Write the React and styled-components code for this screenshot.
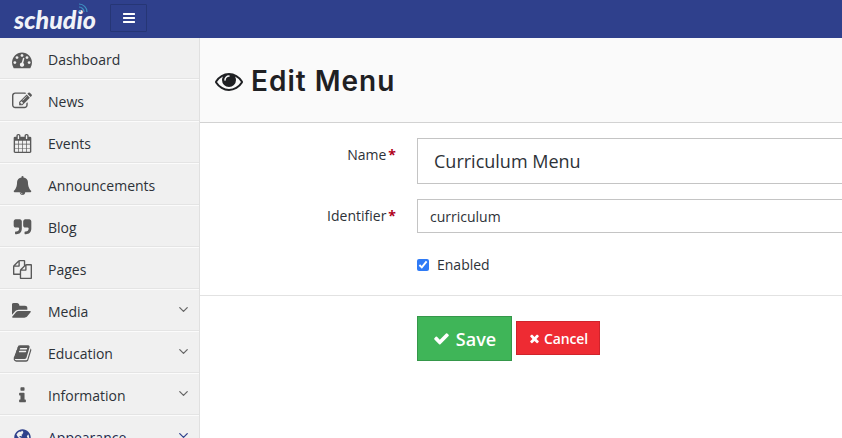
import React from 'react';
import styled, { createGlobalStyle } from 'styled-components';
import { FaGlobeAmericas } from 'react-icons/fa';
import { FiChevronDown } from 'react-icons/fi';

const GlobalStyle = createGlobalStyle`
  html, body {
    margin: 0;
    height: 100%;
    overflow: hidden;
    background: #fff;
    font-family: "Open Sans", "Liberation Sans", sans-serif;
  }
`;

// Font Awesome 4 glyphs, the set the page uses
const glyphs = {
  tachometer: 'M384 1216q0-53-37.500-90.500t-90.500-37.500-90.500 37.500-37.500 90.500 37.500 90.500 90.500 37.500 90.500-37.500 37.500-90.500zm192-448q0-53-37.500-90.500t-90.500-37.500-90.500 37.500-37.500 90.500 37.500 90.500 90.500 37.500 90.500-37.500 37.500-90.500zm428 481l101-382q6-26-7.500-48.500t-38.500-29.500-48 6.500-30 39.500l-101 382q-60 5-107 43.500t-63 98.500q-20 77 20 146t117 89 146-20 89-117q16-60-6-117t-72-91zm660-33q0-53-37.500-90.500t-90.500-37.500-90.500 37.500-37.500 90.500 37.500 90.500 90.500 37.500 90.500-37.500 37.500-90.500zm-640-640q0-53-37.500-90.500t-90.500-37.500-90.500 37.500-37.500 90.500 37.500 90.500 90.500 37.500 90.500-37.500 37.500-90.500zm448 192q0-53-37.500-90.500t-90.500-37.500-90.500 37.500-37.500 90.500 37.500 90.500 90.500 37.500 90.500-37.500 37.500-90.500zm320 448q0 261-141 483-19 29-54 29h-1402q-35 0-54-29-141-221-141-483 0-182 71-348t191-286 286-191 348-71 348 71 286 191 191 286 71 348z',
  edit: 'M888 1184l116-116-152-152-116 116v56h96v96h56zm440-720q-16-16-33 1l-350 350q-17 17-1 33t33-1l350-350q17-17 1-33zm80 594v190q0 119-84.500 203.500t-203.500 84.500h-832q-119 0-203.500-84.500t-84.500-203.500v-832q0-119 84.500-203.500t203.500-84.500h832q63 0 117 25 15 7 18 23 3 17-9 29l-49 49q-14 14-32 8-23-6-45-6h-832q-66 0-113 47t-47 113v832q0 66 47 113t113 47h832q66 0 113-47t47-113v-126q0-13 9-22l64-64q15-15 35-7t20 29zm-96-738l288 288-672 672h-288v-288zm444 132l-92 92-288-288 92-92q28-28 68-28t68 28l152 152q28 28 28 68t-28 68z',
  calendar: 'M192 1664h288v-288h-288v288zm352 0h320v-288h-320v288zm-352-352h288v-320h-288v320zm352 0h320v-320h-320v320zm-352-384h288v-288h-288v288zm736 736h320v-288h-320v288zm-384-736h320v-288h-320v288zm768 736h288v-288h-288v288zm-384-352h320v-320h-320v320zm-352-864v-288q0-13-9.500-22.500t-22.500-9.500h-64q-13 0-22.500 9.500t-9.500 22.500v288q0 13 9.500 22.500t22.500 9.500h64q13 0 22.500-9.500t9.500-22.500zm736 864h288v-320h-288v320zm-384-384h320v-288h-320v288zm384 0h288v-288h-288v288zm32-480v-288q0-13-9.500-22.500t-22.500-9.500h-64q-13 0-22.500 9.500t-9.500 22.500v288q0 13 9.500 22.500t22.500 9.500h64q13 0 22.500-9.500t9.500-22.500zm384-64v1280q0 52-38 90t-90 38h-1408q-52 0-90-38t-38-90v-1280q0-52 38-90t90-38h128v-96q0-66 47-113t113-47h64q66 0 113 47t47 113v96h384v-96q0-66 47-113t113-47h64q66 0 113 47t47 113v96h128q52 0 90 38t38 90z',
  bell: 'M912 1696q0-16-16-16-59 0-101.500-42.500t-42.500-101.500q0-16-16-16t-16 16q0 73 51.500 124.500t124.500 51.500q16 0 16-16zm816-288q0 52-38 90t-90 38h-448q0 106-75 181t-181 75-181-75-75-181h-448q-52 0-90-38t-38-90q50-42 91-88t85-119.500 74.500-158.500 50-206 19.500-260q0-152 117-282.500t307-158.500q-8-19-8-39 0-40 28-68t68-28 68 28 28 68q0 20-8 39 190 28 307 158.500t117 282.500q0 139 19.500 260t50 206 74.500 158.500 85 119.500 91 88z',
  quote: 'M832 320v704q0 104-40.500 198.500t-109.500 163.500-163.500 109.500-198.500 40.500h-64q-26 0-45-19t-19-45v-128q0-26 19-45t45-19h64q106 0 181-75t75-181v-32q0-40-28-68t-68-28h-224q-80 0-136-56t-56-136v-384q0-80 56-136t136-56h384q80 0 136 56t56 136zm896 0v704q0 104-40.500 198.500t-109.500 163.500-163.500 109.500-198.500 40.500h-64q-26 0-45-19t-19-45v-128q0-26 19-45t45-19h64q106 0 181-75t75-181v-32q0-40-28-68t-68-28h-224q-80 0-136-56t-56-136v-384q0-80 56-136t136-56h384q80 0 136 56t56 136z',
  files: 'M1696 384q40 0 68 28t28 68v1216q0 40-28 68t-68 28h-960q-40 0-68-28t-28-68v-288h-544q-40 0-68-28t-28-68v-672q0-40 20-88t48-76l408-408q28-28 76-48t88-20h416q40 0 68 28t28 68v328q68-40 128-40h416zm-544 213l-299 299h299v-299zm-640-384l-299 299h299v-299zm196 647l316-316v-416h-384v416q0 40-28 68t-68 28h-416v640h512v-256q0-40 20-88t48-76zm956 804v-1152h-384v416q0 40-28 68t-68 28h-416v640h896z',
  folder: 'M1815 952q0 31-31 66l-336 396q-43 51-120.500 86.500t-143.500 35.500h-1088q-34 0-60.500-13t-26.500-43q0-31 31-66l336-396q43-51 120.500-86.500t143.500-35.500h1088q34 0 60.500 13t26.500 43zm-343-344v160h-832q-94 0-197 47.500t-164 119.500l-337 396-5 6q0-4-.5-12.500t-.5-12.500v-960q0-92 66-158t158-66h320q92 0 158 66t66 158v32h544q92 0 158 66t66 158z',
  book: 'M1703 478q40 57 18 129l-275 906q-19 64-76.500 107.500t-122.500 43.500h-923q-77 0-148.500-53.500t-99.500-131.500q-24-67-2-127 0-4 3-27t4-37q1-8-3-21.500t-3-19.500q2-11 8-21t16.500-23.500 16.500-23.500q23-38 45-91.500t30-91.500q3-10 .5-30t-.5-28q3-11 17-28t17-23q21-36 42-92t25-90q1-9-2.500-32t.5-28q4-13 22-30.500t22-22.500q19-26 42.500-84.500t27.500-96.500q1-8-3-25.500t-2-26.500q2-8 9-18t18-23 17-21q8-12 16.500-30.500t15-35 16-36 19.500-32 26.500-23.500 36-11.500 47.500 5.500l-1 3q38-9 51-9h761q74 0 114 56t18 130l-274 906q-36 119-71.500 153.500t-128.500 34.500h-869q-27 0-38 15-11 16-1 43 24 70 144 70h923q29 0 56-15.500t35-41.500l300-987q7-22 5-57 38 15 59 43zm-1064 2q-4 13 2 22.500t20 9.500h608q13 0 25.500-9.500t16.500-22.500l21-64q4-13-2-22.500t-20-9.500h-608q-13 0-25.500 9.500t-16.500 22.500zm-83 256q-4 13 2 22.500t20 9.500h608q13 0 25.500-9.500t16.500-22.500l21-64q4-13-2-22.500t-20-9.500h-608q-13 0-25.500 9.500t-16.500 22.500z',
  info: 'M1216 1344v128q0 26-19 45t-45 19h-512q-26 0-45-19t-19-45v-128q0-26 19-45t45-19h64v-384h-64q-26 0-45-19t-19-45v-128q0-26 19-45t45-19h384q26 0 45 19t19 45v576h64q26 0 45 19t19 45zm-128-1152v192q0 26-19 45t-45 19h-256q-26 0-45-19t-19-45v-192q0-26 19-45t45-19h256q26 0 45 19t19 45z',
  eye: 'M1664 960q-152-236-381-353 61 104 61 225 0 185-131.500 316.500t-316.500 131.500-316.500-131.500-131.500-316.500q0-121 61-225-229 117-381 353 133 205 333.500 326.500t434.500 121.500 434.500-121.500 333.500-326.500zm-720-384q0-20-14-34t-34-14q-125 0-214.500 89.500t-89.500 214.500q0 20 14 34t34 14 34-14 14-34q0-86 61-147t147-61q20 0 34-14t14-34zm848 384q0 34-20 69-140 230-376.500 368.500t-499.500 138.500-499.500-139-376.500-368q-20-35-20-69t20-69q140-229 376.500-368t499.500-139 499.500 139 376.500 368q20 35 20 69z',
  check: 'M1671 566q0 40-28 68l-724 724-136 136q-28 28-68 28t-68-28l-136-136-362-362q-28-28-28-68t28-68l136-136q28-28 68-28t68 28l294 295 656-657q28-28 68-28t68 28l136 136q28 28 28 68z',
  times: 'M1490 1322q0 40-28 68l-136 136q-28 28-68 28t-68-28l-294-294-294 294q-28 28-68 28t-68-28l-136-136q-28-28-28-68t28-68l294-294-294-294q-28-28-28-68t28-68l136-136q28-28 68-28t68 28l294 294 294-294q28-28 68-28t68 28l136 136q28 28 28 68t-28 68l-294 294 294 294q28 28 28 68z',
  bars: 'M1664 1344v128q0 26-19 45t-45 19h-1408q-26 0-45-19t-19-45v-128q0-26 19-45t45-19h1408q26 0 45 19t19 45zm0-512v128q0 26-19 45t-45 19h-1408q-26 0-45-19t-19-45v-128q0-26 19-45t45-19h1408q26 0 45 19t19 45zm0-512v128q0 26-19 45t-45 19h-1408q-26 0-45-19t-19-45v-128q0-26 19-45t45-19h1408q26 0 45 19t19 45z',
};

const Fa = ({ name, size = 16, wide }) => (
  <svg width={size} height={size} viewBox={wide ? '0 0 1920 1792' : '0 0 1792 1792'} fill="currentColor">
    <path d={glyphs[name]} />
  </svg>
);

const Page = styled.div`
  width: 842px;
  height: 438px;
  overflow: hidden;
  display: flex;
  flex-direction: column;
`;

const TopBar = styled.header`
  flex: 0 0 38px;
  display: flex;
  align-items: center;
  background-color: #2f408c;
`;

const Logo = styled.div`
  position: relative;
  width: 110px;
  padding-left: 14px;
  box-sizing: border-box;
  font-family: Lato, "Open Sans", sans-serif;
  font-style: italic;
  font-weight: 900;
  font-size: 25px;
  color: #f1f3f8;
  line-height: 38px;
`;

const Signal = styled.svg`
  position: absolute;
  left: 78px;
  top: 3px;
`;

const MenuToggle = styled.button`
  width: 37px;
  height: 28px;
  margin-bottom: 2px;
  padding: 0;
  display: flex;
  align-items: center;
  justify-content: center;
  background-color: #2f408c;
  color: #fff;
  border: 1px solid #263675;
  border-radius: 1px;
`;

const Body = styled.div`
  flex: 1;
  display: flex;
  min-height: 0;
`;

const Sidebar = styled.nav`
  flex: 0 0 199px;
  background-color: #f0f0f0;
  border-right: 1px solid #e0e0e0;
  overflow: hidden;
`;

const NavItem = styled.div`
  padding: 2px 8px 1px 12px;
  box-sizing: border-box;
  height: 42px;
  display: flex;
  align-items: center;
  border-bottom: 1px solid #fbfbfb;
  box-shadow: inset 0 -1px 0 #e4e4e4;
  color: ${p => (p.$active ? '#1f2a4d' : '#2d3238')};
  font-size: 14px;
`;

const NavIcon = styled.span`
  display: flex;
  justify-content: center;
  width: 20px;
  margin-right: 16px;
  color: ${p => (p.$active ? '#2f408c' : '#595959')};
`;

const NavLabel = styled.span`
  flex: 1;
`;

const Chevron = styled(FiChevronDown)`
  margin-top: -4px;
  color: ${p => (p.$active ? '#2f408c' : '#666')};
  font-size: 15px;
`;

const Main = styled.main`
  flex: 1;
  min-width: 0;
`;

const PageHeader = styled.div`
  height: 82px;
  display: flex;
  align-items: center;
  padding: 2px 0 0 15px;
  background-color: #fafafa;
  border-bottom: 1px solid #d2d2d2;
`;

const Title = styled.h1`
  margin: 0;
  display: flex;
  align-items: center;
  gap: 8px;
  font-family: Inter, "Liberation Sans", sans-serif;
  font-size: 28px;
  font-weight: 600;
  letter-spacing: 1px;
  color: #1f2023;
`;

const Form = styled.form`
  padding-top: 15px;
`;

const Row = styled.div`
  display: flex;
  margin-bottom: ${p => p.$gap || 0}px;
`;

const Label = styled.label`
  width: 217px;
  text-align: right;
  padding: 7px 21px 0 0;
  box-sizing: border-box;
  font-size: 14px;
  color: #2d3238;
  line-height: 20px;
`;

const Required = styled.span`
  color: #b00020;
  font-weight: 700;
  margin-left: 2px;
`;

const Input = styled.input`
  flex: 1;
  min-width: 0;
  height: ${p => (p.$large ? 46 : 34)}px;
  padding: 0 ${p => (p.$large ? 16 : 12)}px;
  box-sizing: border-box;
  border: 1px solid #c4c4c4;
  border-right: 0;
  outline: 0;
  font-family: inherit;
  font-size: ${p => (p.$large ? 18 : 14)}px;
  color: #2d3238;
`;

const CheckRow = styled.div`
  display: flex;
  align-items: center;
  gap: 8px;
  padding-left: 217px;
  margin-top: 22px;
  font-size: 14px;
  color: #2d3238;
`;

const Check = styled.input`
  margin: 0;
  width: 12px;
  height: 12px;
  accent-color: #2f7bf6;
`;

const Divider = styled.hr`
  margin: 21px 0 20px;
  border: 0;
  border-top: 1px solid #e2e2e2;
`;

const Actions = styled.div`
  display: flex;
  align-items: flex-start;
  gap: 4px;
  padding-left: 217px;
`;

const SaveButton = styled.button`
  width: 95px;
  height: 45px;
  display: flex;
  align-items: center;
  justify-content: center;
  gap: 6px;
  padding: 0;
  background-color: #3fb558;
  border: 1px solid #35974a;
  color: #fff;
  font-family: inherit;
  font-size: 18px;
  font-weight: 600;
`;

const CancelButton = styled.button`
  width: 84px;
  height: 34px;
  margin-top: 5px;
  display: flex;
  align-items: center;
  justify-content: center;
  gap: 3px;
  padding: 0;
  background-color: #ee2b33;
  border: 1px solid #d0232b;
  color: #fff;
  font-family: inherit;
  font-size: 14px;
  font-weight: 600;
  letter-spacing: -0.1px;
`;

const items = [
  { label: 'Dashboard', icon: 'tachometer', size: 20 },
  { label: 'News', icon: 'edit', size: 20 },
  { label: 'Events', icon: 'calendar', size: 19 },
  { label: 'Announcements', icon: 'bell', size: 19 },
  { label: 'Blog', icon: 'quote', size: 19 },
  { label: 'Pages', icon: 'files', size: 19 },
  { label: 'Media', icon: 'folder', size: 20, wide: true, more: true },
  { label: 'Education', icon: 'book', size: 19, more: true },
  { label: 'Information', icon: 'info', size: 19, more: true },
];

export default function App() {
  return (
    <Page>
      <GlobalStyle />
      <TopBar>
        <Logo>
          schudio
          <Signal width="10" height="10" viewBox="0 0 10 10" fill="none" stroke="#3d8fc0" strokeWidth="1.2">
            <path d="M1 4a5 5 0 0 1 5 5M1 1a8 8 0 0 1 8 8" />
            <circle cx="2" cy="8" r="1" fill="#3d8fc0" stroke="none" />
          </Signal>
        </Logo>
        <MenuToggle aria-label="Toggle menu"><Fa name="bars" size={14} /></MenuToggle>
      </TopBar>
      <Body>
        <Sidebar>
          {items.map(({ label, icon, size, wide, more }) => (
            <NavItem key={label}>
              <NavIcon><Fa name={icon} size={size} wide={wide} /></NavIcon>
              <NavLabel>{label}</NavLabel>
              {more && <Chevron />}
            </NavItem>
          ))}
          <NavItem $active>
            <NavIcon $active><FaGlobeAmericas size={17} /></NavIcon>
            <NavLabel>Appearance</NavLabel>
            <Chevron $active />
          </NavItem>
        </Sidebar>
        <Main>
          <PageHeader>
            <Title><Fa name="eye" size={28} />Edit Menu</Title>
          </PageHeader>
          <Form>
            <Row $gap={15}>
              <Label>Name<Required>*</Required></Label>
              <Input $large defaultValue="Curriculum Menu" />
            </Row>
            <Row>
              <Label>Identifier<Required>*</Required></Label>
              <Input defaultValue="curriculum" />
            </Row>
            <CheckRow>
              <Check type="checkbox" defaultChecked />
              Enabled
            </CheckRow>
            <Divider />
            <Actions>
              <SaveButton type="button"><Fa name="check" size={17} />Save</SaveButton>
              <CancelButton type="button"><Fa name="times" size={13} />Cancel</CancelButton>
            </Actions>
          </Form>
        </Main>
      </Body>
    </Page>
  );
}
